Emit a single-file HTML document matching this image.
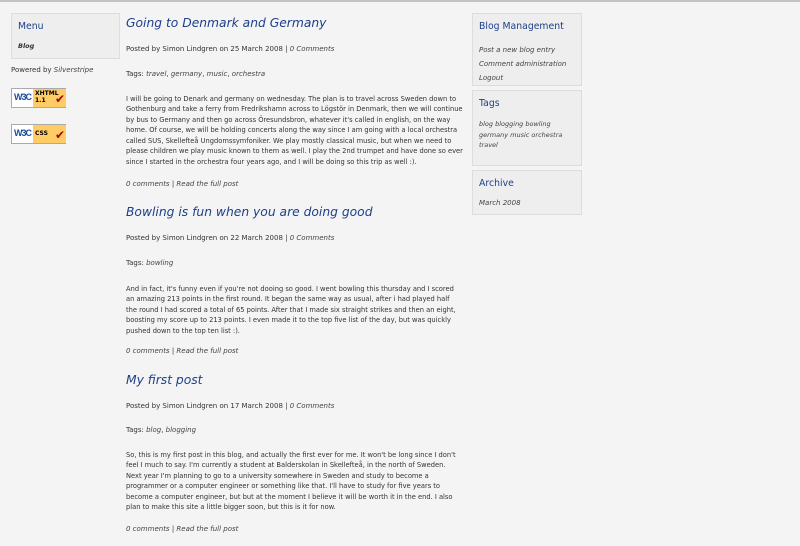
<!DOCTYPE html>
<html><head><meta charset="utf-8"><style>
body{margin:0;background:#f4f4f4;width:800px;height:546px;overflow:hidden;font-family:"DejaVu Sans","Liberation Sans",sans-serif;color:#333;font-size:7px;border-top:2px solid #c4c4c4;box-sizing:border-box;position:relative}
.a{position:absolute;white-space:nowrap}
.box{position:absolute;background:#eee;border:1px solid #ddd;box-sizing:border-box}
.box h3{margin:0;position:absolute;left:6px;font-weight:normal;font-size:9.3px;color:#1d3f8a}
i{color:#444}
.t{font-style:italic;color:#1d3f8a;font-size:12.3px}
.p{line-height:10.45px;font-size:6.7px}
.badge{position:absolute;left:11px;width:55px;height:20px;border:1px solid #aaa;background:#fff;box-sizing:border-box}
.badge .w{position:absolute;left:2px;top:3px;font-size:9px;color:#1b4c9c;font-family:"Liberation Sans",sans-serif;font-weight:bold;letter-spacing:-1px}
.badge .y{position:absolute;left:21px;top:0;width:33px;height:18px;background:#fc6;font-size:6px;font-weight:bold;color:#000;padding:1px 2px;box-sizing:border-box;line-height:7px}
.badge .c{position:absolute;right:0;top:3px;color:#a00;font-size:12px;font-weight:bold}
</style></head><body>
<div class="box" style="left:11px;top:11px;width:109px;height:46px">
<h3 style="top:7px">Menu</h3>
<div class="a" style="left:6px;top:28px;font-style:italic;font-weight:bold;font-size:6.5px">Blog</div></div>
<div class="a" style="left:11px;top:64px">Powered by <i>Silverstripe</i></div>
<div class="badge" style="top:86px"><span class="w">W3C</span><div class="y">XHTML<br>1.1</div><span class="c">✔</span></div>
<div class="badge" style="top:122px"><span class="w">W3C</span><div class="y" style="padding-top:5px">CSS</div><span class="c">✔</span></div>

<div class="box" style="left:472px;top:11px;width:110px;height:73px">
<h3 style="top:7px">Blog Management</h3>
<div class="a" style="left:6px;top:29px;line-height:14px"><i>Post a new blog entry</i><br><i>Comment administration</i><br><i>Logout</i></div></div>
<div class="box" style="left:472px;top:88px;width:110px;height:76px">
<h3 style="top:7px">Tags</h3>
<div class="a" style="left:6px;top:28px;line-height:10.5px;font-size:6.5px"><i>blog blogging bowling<br>germany music orchestra<br>travel</i></div></div>
<div class="box" style="left:472px;top:168px;width:110px;height:45px">
<h3 style="top:7px">Archive</h3>
<div class="a" style="left:6px;top:28px"><i>March 2008</i></div></div>

<div class="a t" style="left:126px;top:14px">Going to Denmark and Germany</div>
<div class="a" style="left:126px;top:43px">Posted by Simon Lindgren on 25 March 2008 | <i>0 Comments</i></div>
<div class="a" style="left:126px;top:68px">Tags: <i>travel</i>, <i>germany</i>, <i>music</i>, <i>orchestra</i></div>
<div class="a p" style="left:126px;top:92px">I will be going to Denark and germany on wednesday. The plan is to travel across Sweden down to<br>Gothenburg and take a ferry from Fredrikshamn across to Lögstör in Denmark, then we will continue<br>by bus to Germany and then go across Öresundsbron, whatever it's called in english, on the way<br>home. Of course, we will be holding concerts along the way since I am going with a local orchestra<br>called SUS, Skellefteå Ungdomssymfoniker. We play mostly classical music, but when we need to<br>please children we play music known to them as well. I play the 2nd trumpet and have done so ever<br>since I started in the orchestra four years ago, and I will be doing so this trip as well :).</div>
<div class="a" style="left:126px;top:178px"><i>0 comments</i> | <i>Read the full post</i></div>

<div class="a t" style="left:126px;top:203px">Bowling is fun when you are doing good</div>
<div class="a" style="left:126px;top:232px">Posted by Simon Lindgren on 22 March 2008 | <i>0 Comments</i></div>
<div class="a" style="left:126px;top:257px">Tags: <i>bowling</i></div>
<div class="a p" style="left:126px;top:282px">And in fact, it's funny even if you're not dooing so good. I went bowling this thursday and I scored<br>an amazing 213 points in the first round. It began the same way as usual, after i had played half<br>the round I had scored a total of 65 points. After that I made six straight strikes and then an eight,<br>boosting my score up to 213 points. I even made it to the top five list of the day, but was quickly<br>pushed down to the top ten list :).</div>
<div class="a" style="left:126px;top:345px"><i>0 comments</i> | <i>Read the full post</i></div>

<div class="a t" style="left:126px;top:371px">My first post</div>
<div class="a" style="left:126px;top:400px">Posted by Simon Lindgren on 17 March 2008 | <i>0 Comments</i></div>
<div class="a" style="left:126px;top:424px">Tags: <i>blog</i>, <i>blogging</i></div>
<div class="a p" style="left:126px;top:448px">So, this is my first post in this blog, and actually the first ever for me. It won't be long since I don't<br>feel I much to say. I'm currently a student at Balderskolan in Skellefteå, in the north of Sweden.<br>Next year I'm planning to go to a university somewhere in Sweden and study to become a<br>programmer or a computer engineer or something like that. I'll have to study for five years to<br>become a computer engineer, but but at the moment I believe it will be worth it in the end. I also<br>plan to make this site a little bigger soon, but this is it for now.</div>
<div class="a" style="left:126px;top:523px"><i>0 comments</i> | <i>Read the full post</i></div>
</body></html>
